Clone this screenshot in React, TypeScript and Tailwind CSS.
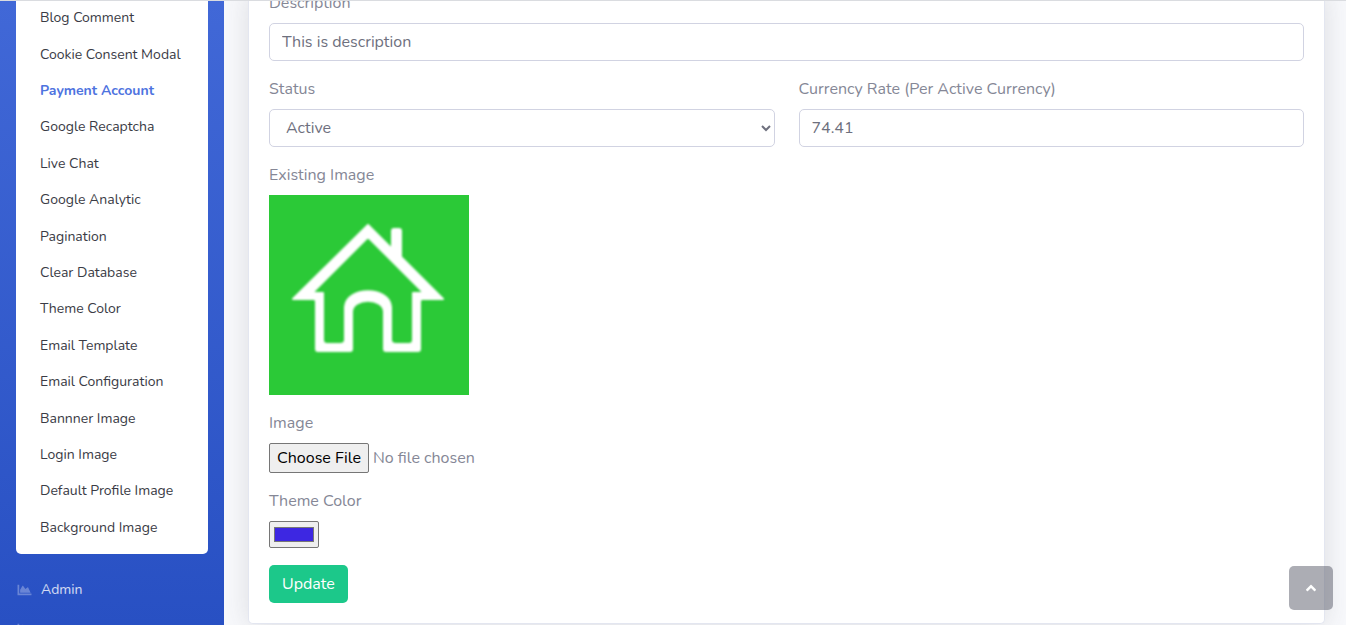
import { FaAngleUp, FaChartArea } from 'react-icons/fa';

const settingsLinks = [
  'Blog Comment',
  'Cookie Consent Modal',
  'Payment Account',
  'Google Recaptcha',
  'Live Chat',
  'Google Analytic',
  'Pagination',
  'Clear Database',
  'Theme Color',
  'Email Template',
  'Email Configuration',
  'Bannner Image',
  'Login Image',
  'Default Profile Image',
  'Background Image',
];

const activeLink = 'Payment Account';

function Sidebar() {
  return (
    <nav className="flex w-56 shrink-0 flex-col overflow-hidden bg-linear-to-b from-[#4168d7] to-[#2850c3]">
      <div className="mx-4 shrink-0 rounded-b-[5px] bg-white pb-2 text-sm text-[#3a3b45]">
        <ul className="-mt-px grid h-[546px] auto-rows-fr">
          {settingsLinks.map((label) => (
            <li key={label} className="flex items-center px-6">
              <a
                href="#"
                className={label === activeLink ? 'whitespace-nowrap font-bold text-[#4e73df]' : 'whitespace-nowrap'}
              >
                {label}
              </a>
            </li>
          ))}
        </ul>
      </div>
      <a href="#" className="mt-4 flex h-10 shrink-0 items-center gap-2 px-4 text-sm text-white/80">
        <FaChartArea className="w-[17px] text-white/30" />
        Admin
      </a>
      <a href="#" aria-label="Reports" className="mt-3 shrink-0 px-4">
        <FaChartArea className="w-[17px] text-sm text-white/30" />
      </a>
    </nav>
  );
}

function HouseImage() {
  return (
    <svg role="img" aria-label="House" viewBox="0 0 200 200" className="block size-[200px] bg-[#2bc937]">
      <path
        className="blur-[1px]"
        fill="#fff"
        stroke="#fff"
        strokeWidth="2"
        strokeLinejoin="round"
        fillRule="evenodd"
        d="M99 30 L123 54 V36 Q123 34 125 34 H130 Q132 34 132 36 V62 L174 104 H153 Q151 104 151 107 V154 Q151 156 149 156 H117 Q115 156 115 154 V117 C115 102 83 102 83 117 V154 Q83 156 81 156 H49 Q47 156 47 154 V107 Q47 104 45 104 H24 Z M99 42 L43 98 H54 V145 Q54 149 58 149 H71 Q76 149 76 145 V112 C78 91 120 91 122 112 V145 Q122 149 127 149 H140 Q144 149 144 145 V98 H155 Z"
      />
    </svg>
  );
}

const labelClass = 'mb-2 block';
const fieldClass = 'h-[38px] w-full rounded-[5px] border border-[#d1d3e2] bg-white px-3 text-[#6e707e]';

export default function App() {
  return (
    <div className="flex h-screen overflow-hidden border-t border-[#dadce0] bg-[#f8f9fc] font-['Nunito','Lato',sans-serif] text-base text-[#858796]">
      <Sidebar />
      <main className="min-w-0 flex-1 pr-[21px] pl-6">
        <form
          onSubmit={(event) => event.preventDefault()}
          className="rounded-b-[5px] border border-t-0 border-[#e3e6f0] bg-white px-5 pb-5 shadow-[0_2px_28px_rgba(58,59,69,0.15)]"
        >
          <div className="mb-4">
            <label htmlFor="description" className={`${labelClass} -mt-2.5`}>
              Description
            </label>
            <input id="description" type="text" defaultValue="This is description" className={fieldClass} />
          </div>
          <div className="mb-4 grid grid-cols-2 gap-6">
            <div>
              <label htmlFor="status" className={labelClass}>
                Status
              </label>
              <select id="status" className={fieldClass}>
                <option>Active</option>
                <option>Inactive</option>
              </select>
            </div>
            <div>
              <label htmlFor="rate" className={labelClass}>
                Currency Rate (Per Active Currency)
              </label>
              <input id="rate" type="text" defaultValue="74.41" className={fieldClass} />
            </div>
          </div>
          <div className="mb-4">
            <p className={labelClass}>Existing Image</p>
            <HouseImage />
          </div>
          <div className="mb-4">
            <label htmlFor="image" className={labelClass}>
              Image
            </label>
            <input
              id="image"
              type="file"
              className="block h-[30px] file:mr-1 file:h-[30px] file:rounded-[2px] file:border file:border-solid file:border-[#767676] file:bg-[#efefef] file:px-[7px] file:text-black"
            />
          </div>
          <div className="mb-[17px]">
            <label htmlFor="color" className={labelClass}>
              Theme Color
            </label>
            <input
              id="color"
              type="color"
              defaultValue="#3d27e2"
              className="block h-[27px] w-[50px] rounded-[2px] border border-[#767676] bg-[#efefef] px-0.5 py-px"
            />
          </div>
          <button type="submit" className="h-[38px] rounded-[5px] bg-[#1cc88a] px-[13px] text-white">
            Update
          </button>
        </form>
      </main>
      <a
        href="#"
        aria-label="Scroll to top"
        className="fixed right-[13px] bottom-[15px] flex size-11 items-center justify-center rounded-[5px] bg-[#5a5c69]/50 text-white"
      >
        <FaAngleUp />
      </a>
    </div>
  );
}
